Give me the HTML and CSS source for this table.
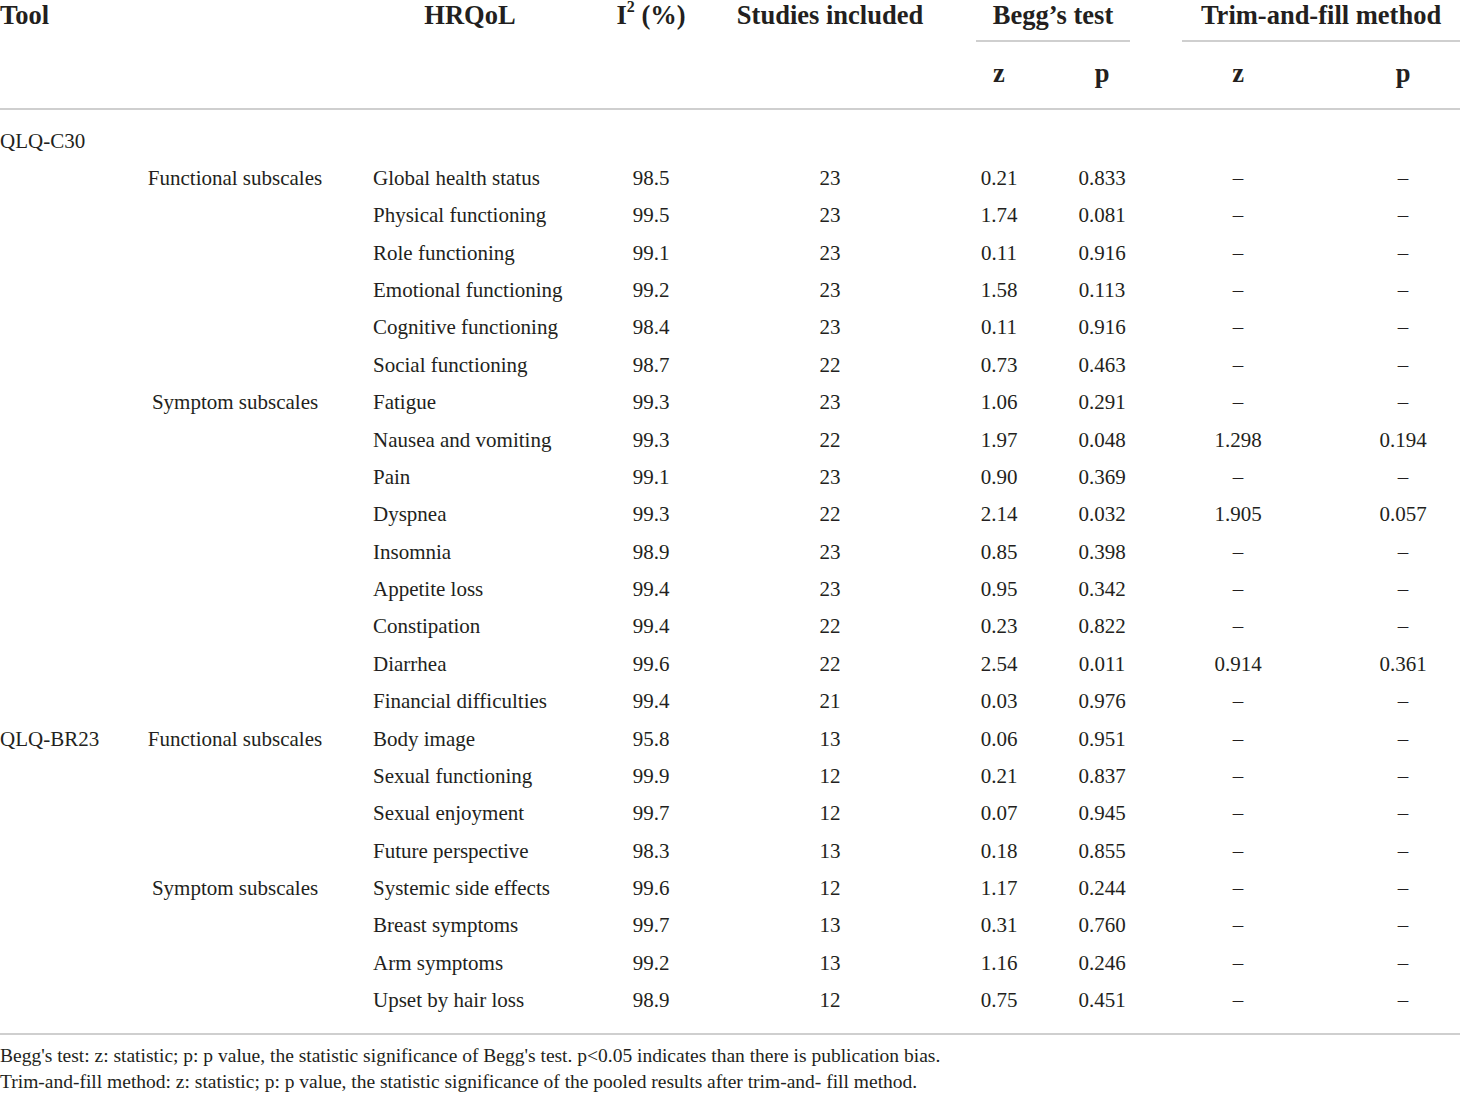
FILE: index.html
```html
<!DOCTYPE html>
<html lang="en">
<head>
<meta charset="utf-8">
<title>Publication bias table</title>
<link rel="stylesheet" href="styles.css">
</head>
<body>
<div class="wrap">
<table class="tbl">
  <colgroup>
    <col class="c1"><col class="c2"><col class="c3"><col class="c4"><col class="c5">
    <col class="c6"><col class="c7"><col class="c8"><col class="c9">
  </colgroup>
  <thead>
    <tr class="h1">
      <th rowspan="2" class="left">Tool</th>
      <th rowspan="2"></th>
      <th rowspan="2">HRQoL</th>
      <th rowspan="2">I<sup>2</sup> (%)</th>
      <th rowspan="2">Studies included</th>
      <th colspan="2" class="grp"><div class="grp-in">Begg’s test</div></th>
      <th colspan="2" class="grp"><div class="grp-in">Trim-and-fill method</div></th>
    </tr>
    <tr class="h2">
      <th>z</th><th>p</th><th>z</th><th>p</th>
    </tr>
  </thead>
  <tbody>
    <tr class="first"><td class="left">QLQ-C30</td><td></td><td></td><td></td><td></td><td></td><td></td><td></td><td></td></tr>
    <tr><td></td><td>Functional subscales</td><td class="item">Global health status</td><td>98.5</td><td>23</td><td>0.21</td><td>0.833</td><td>–</td><td>–</td></tr>
    <tr><td></td><td></td><td class="item">Physical functioning</td><td>99.5</td><td>23</td><td>1.74</td><td>0.081</td><td>–</td><td>–</td></tr>
    <tr><td></td><td></td><td class="item">Role functioning</td><td>99.1</td><td>23</td><td>0.11</td><td>0.916</td><td>–</td><td>–</td></tr>
    <tr><td></td><td></td><td class="item">Emotional functioning</td><td>99.2</td><td>23</td><td>1.58</td><td>0.113</td><td>–</td><td>–</td></tr>
    <tr><td></td><td></td><td class="item">Cognitive functioning</td><td>98.4</td><td>23</td><td>0.11</td><td>0.916</td><td>–</td><td>–</td></tr>
    <tr><td></td><td></td><td class="item">Social functioning</td><td>98.7</td><td>22</td><td>0.73</td><td>0.463</td><td>–</td><td>–</td></tr>
    <tr><td></td><td>Symptom subscales</td><td class="item">Fatigue</td><td>99.3</td><td>23</td><td>1.06</td><td>0.291</td><td>–</td><td>–</td></tr>
    <tr><td></td><td></td><td class="item">Nausea and vomiting</td><td>99.3</td><td>22</td><td>1.97</td><td>0.048</td><td>1.298</td><td>0.194</td></tr>
    <tr><td></td><td></td><td class="item">Pain</td><td>99.1</td><td>23</td><td>0.90</td><td>0.369</td><td>–</td><td>–</td></tr>
    <tr><td></td><td></td><td class="item">Dyspnea</td><td>99.3</td><td>22</td><td>2.14</td><td>0.032</td><td>1.905</td><td>0.057</td></tr>
    <tr><td></td><td></td><td class="item">Insomnia</td><td>98.9</td><td>23</td><td>0.85</td><td>0.398</td><td>–</td><td>–</td></tr>
    <tr><td></td><td></td><td class="item">Appetite loss</td><td>99.4</td><td>23</td><td>0.95</td><td>0.342</td><td>–</td><td>–</td></tr>
    <tr><td></td><td></td><td class="item">Constipation</td><td>99.4</td><td>22</td><td>0.23</td><td>0.822</td><td>–</td><td>–</td></tr>
    <tr><td></td><td></td><td class="item">Diarrhea</td><td>99.6</td><td>22</td><td>2.54</td><td>0.011</td><td>0.914</td><td>0.361</td></tr>
    <tr><td></td><td></td><td class="item">Financial difficulties</td><td>99.4</td><td>21</td><td>0.03</td><td>0.976</td><td>–</td><td>–</td></tr>
    <tr><td class="left">QLQ-BR23</td><td>Functional subscales</td><td class="item">Body image</td><td>95.8</td><td>13</td><td>0.06</td><td>0.951</td><td>–</td><td>–</td></tr>
    <tr><td></td><td></td><td class="item">Sexual functioning</td><td>99.9</td><td>12</td><td>0.21</td><td>0.837</td><td>–</td><td>–</td></tr>
    <tr><td></td><td></td><td class="item">Sexual enjoyment</td><td>99.7</td><td>12</td><td>0.07</td><td>0.945</td><td>–</td><td>–</td></tr>
    <tr><td></td><td></td><td class="item">Future perspective</td><td>98.3</td><td>13</td><td>0.18</td><td>0.855</td><td>–</td><td>–</td></tr>
    <tr><td></td><td>Symptom subscales</td><td class="item">Systemic side effects</td><td>99.6</td><td>12</td><td>1.17</td><td>0.244</td><td>–</td><td>–</td></tr>
    <tr><td></td><td></td><td class="item">Breast symptoms</td><td>99.7</td><td>13</td><td>0.31</td><td>0.760</td><td>–</td><td>–</td></tr>
    <tr><td></td><td></td><td class="item">Arm symptoms</td><td>99.2</td><td>13</td><td>1.16</td><td>0.246</td><td>–</td><td>–</td></tr>
    <tr class="last"><td></td><td></td><td class="item">Upset by hair loss</td><td>98.9</td><td>12</td><td>0.75</td><td>0.451</td><td>–</td><td>–</td></tr>
  </tbody>
</table>
<div class="notes">
  <p>Begg's test: z: statistic; p: p value, the statistic significance of Begg's test. p&lt;0.05 indicates than there is publication bias.</p>
  <p>Trim-and-fill method: z: statistic; p: p value, the statistic significance of the pooled results after trim-and- fill method.</p>
</div>
</div>
</body>
</html>
```

FILE: styles.css
```css
html, body {
  margin: 0;
  padding: 0;
  background: #ffffff;
  overflow: hidden;
}

.wrap {
  width: 1486px;
  color: #231f20;
  font-family: "Liberation Serif", "Times New Roman", serif;
}

.tbl {
  width: 1486px;
  border-collapse: collapse;
  table-layout: fixed;
}

.c1 { width: 122px; }
.c2 { width: 226px; }
.c3 { width: 244px; }
.c4 { width: 118px; }
.c5 { width: 240px; }
.c6 { width: 98px; }
.c7 { width: 108px; }
.c8 { width: 164px; }
.c9 { width: 166px; }

.tbl th {
  font-weight: bold;
  font-size: 26.5px;
  line-height: 30px;
  text-align: center;
  vertical-align: top;
  padding: 0;
  white-space: nowrap;
}

.tbl th sup {
  font-size: 16px;
  line-height: 0;
  position: relative;
  top: -2px;
  vertical-align: super;
}

.tbl th.left { text-align: left; }

.tbl .h1 th { padding-top: 0; height: 44px; }

.tbl th.grp { padding: 0 26px; }
.grp-in {
  height: 42px;
  border-bottom: 2px solid #cfcfcf;
  box-sizing: border-box;
}

.tbl .h2 th {
  padding-top: 14px;
  padding-bottom: 20px;
}

.tbl thead tr.h2 th,
.tbl thead tr.h1 th[rowspan] {
  border-bottom: 2px solid #cfcfcf;
}

.tbl td {
  font-size: 21px;
  line-height: 25px;
  padding: 6.2px 0;
  text-align: center;
  vertical-align: top;
  white-space: nowrap;
}

.tbl td.left { text-align: left; }
.tbl td.item { text-align: left; padding-left: 25px; }

.tbl tr.first td { padding-top: 18.5px; }
.tbl tr.last td { padding-bottom: 20px; border-bottom: 2px solid #cfcfcf; }

.notes {
  padding-top: 8px;
  font-size: 19.5px;
  line-height: 26px;
}

.notes p {
  margin: 0;
  white-space: nowrap;
}
```
